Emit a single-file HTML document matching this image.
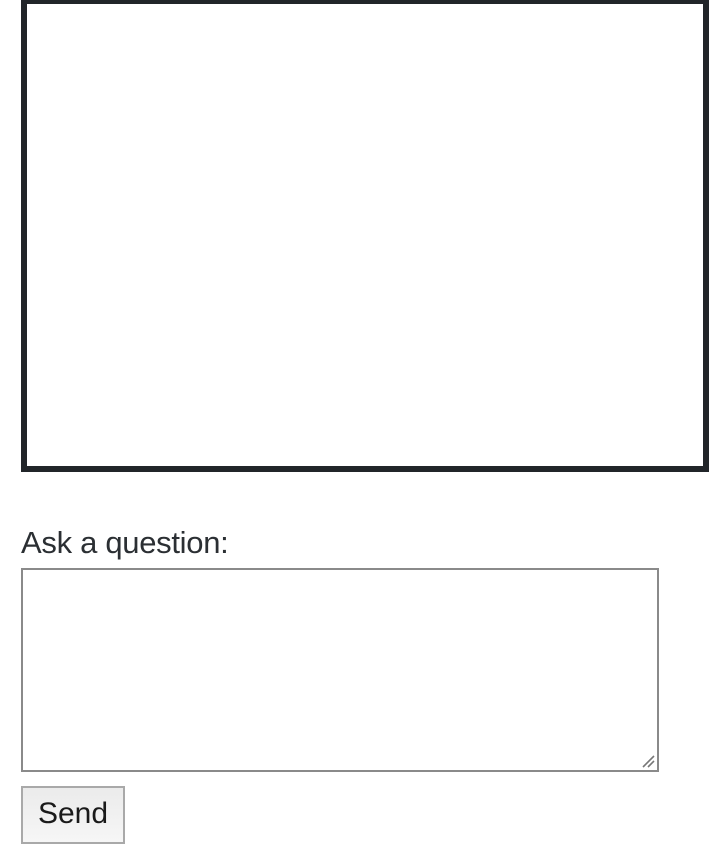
<!DOCTYPE html>
<html><head><style>
html,body{margin:0;padding:0;background:#fff;width:726px;height:858px;overflow:hidden;font-family:"Liberation Sans",sans-serif;}
.box{position:absolute;left:21px;top:-2px;width:676px;height:462px;border:6px solid #212529;background:#fff;}
.lbl{position:absolute;left:21px;top:528px;font-size:31px;line-height:30px;color:#2b2f33;letter-spacing:-0.3px;}
.ta{position:absolute;left:21px;top:568px;width:634px;height:200px;border:2px solid #8a8a8a;background:#fff;}
.grip{position:absolute;right:2px;bottom:2px;}
.btn{position:absolute;left:21px;top:786px;width:100px;height:54px;border:2px solid #a9a9a9;background:linear-gradient(#ebebeb,#f6f6f6);box-sizing:content-box;font-size:30px;line-height:52px;text-align:center;color:#1a1a1a;}
</style></head><body>
<div class="box"></div>
<div class="lbl">Ask a question:</div>
<div class="ta"><svg class="grip" width="14" height="14" viewBox="0 0 14 14"><path d="M2 13L13 2M7 13L13 7" stroke="#777" stroke-width="1.6"/></svg></div>
<div class="btn">Send</div>
</body></html>
